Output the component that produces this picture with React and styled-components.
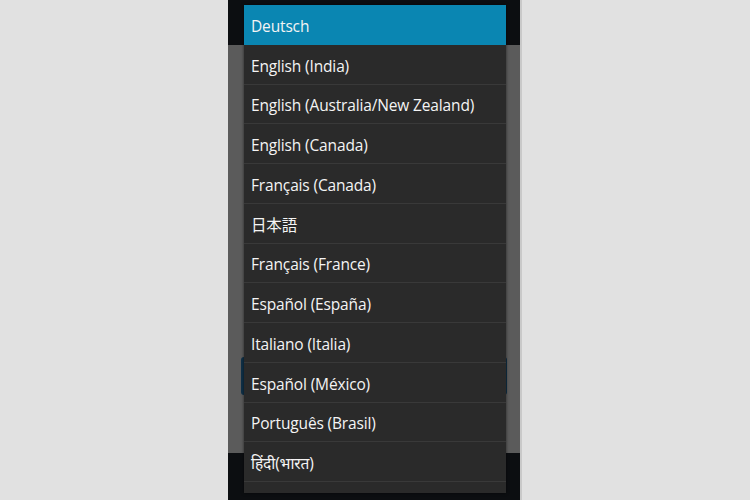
import React from "react";
import styled, { createGlobalStyle } from "styled-components";

const languages = [
  "Deutsch",
  "English (India)",
  "English (Australia/New Zealand)",
  "English (Canada)",
  "Français (Canada)",
  "日本語",
  "Français (France)",
  "Español (España)",
  "Italiano (Italia)",
  "Español (México)",
  "Português (Brasil)",
  "हिंदी(भारत)",
  "",
];

export default function App() {
  return (
    <>
      <GlobalStyle />
      <Page>
        <Phone>
          <TopBar />
          <Dimmed>
            <DimButton />
          </Dimmed>
          <BottomBar />
          <Popup>
            {languages.map((name, i) => (
              <Item key={i} selected={i === 0}>
                {name}
              </Item>
            ))}
          </Popup>
        </Phone>
      </Page>
    </>
  );
}

const GlobalStyle = createGlobalStyle`
  html, body {
    margin: 0;
    padding: 0;
    background: #e1e1e1;
  }
  body {
    font-family: "Open Sans", "Noto Sans", "Noto Sans CJK JP", sans-serif;
  }
`;

const Page = styled.div`
  width: 750px;
  height: 500px;
  display: flex;
  padding-left: 228px;
  box-sizing: border-box;
  overflow: hidden;
`;

const Phone = styled.div`
  position: relative;
  width: 292px;
  height: 500px;
  display: flex;
  flex-direction: column;
  background: #0c0e11;
  border-right: 2px solid #c9c9c9;
`;

const TopBar = styled.div`
  height: 45px;
  background: #0c0e11;
`;

const Dimmed = styled.div`
  height: 408px;
  background: #5b5b5b;
  padding: 312px 13px 0 13px;
  box-sizing: border-box;
`;

const DimButton = styled.div`
  height: 38px;
  border-radius: 3px;
  background: #0f3048;
`;

const BottomBar = styled.div`
  flex: 1;
  background: #0c0e11;
`;

const Popup = styled.div`
  position: absolute;
  top: 5px;
  left: 16px;
  width: 262px;
  height: 488px;
  overflow: hidden;
  background: #2a2a2a;
  box-shadow: 0 0 3px rgba(0, 0, 0, 0.6);
`;

const Item = styled.div`
  height: 39.75px;
  box-sizing: border-box;
  display: flex;
  align-items: center;
  padding: 3px 0 0 7px;
  font-size: 15.5px;
  letter-spacing: -0.15px;
  color: #f4f4f4;
  background: ${({ selected }) => (selected ? "#0a86b2" : "#2a2a2a")};
  border-bottom: 1px solid ${({ selected }) => (selected ? "#0a86b2" : "#393939")};
  white-space: nowrap;
`;
